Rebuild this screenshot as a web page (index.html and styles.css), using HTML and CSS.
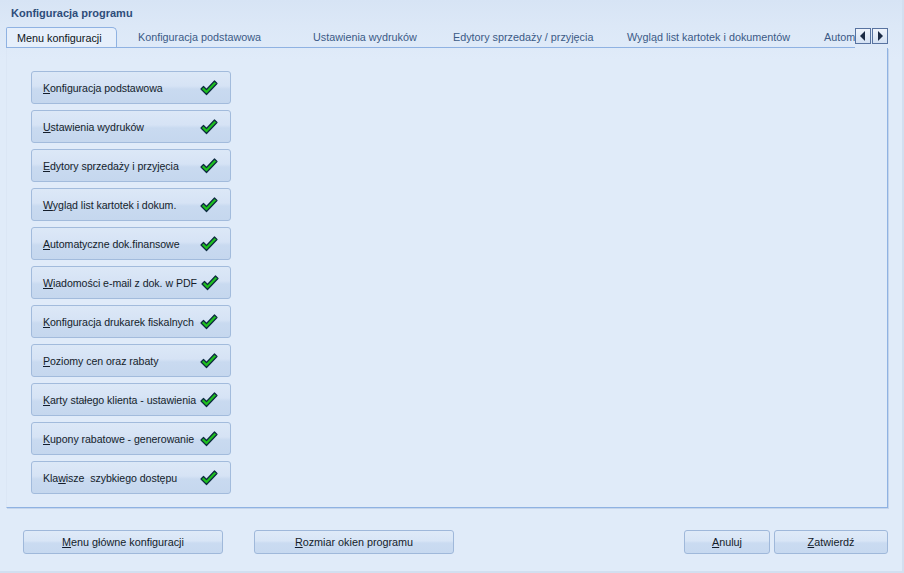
FILE: index.html
```html
<!DOCTYPE html>
<html lang="pl">
<head>
<meta charset="utf-8">
<title>Konfiguracja programu</title>
<link rel="stylesheet" href="styles.css">
</head>
<body>
<div class="window">
  <div class="title">Konfiguracja programu</div>
  <div class="tabbar">
    <div class="tabs">
      <div class="tab active">Menu konfiguracji</div>
      <div class="tab t1">Konfiguracja podstawowa</div>
      <div class="tab t2">Ustawienia wydruków</div>
      <div class="tab t3">Edytory sprzedaży / przyjęcia</div>
      <div class="tab t4">Wygląd list kartotek i dokumentów</div>
      <div class="tab t5">Automatyczne dok.finansowe</div>
    </div>
    <div class="scroll">
      <span class="arrow"><svg width="8" height="10" viewBox="0 0 8 10"><polygon points="6,0 6,10 1,5" fill="#1b2a44"/></svg></span>
      <span class="arrow"><svg width="8" height="10" viewBox="0 0 8 10"><polygon points="2,0 2,10 7,5" fill="#1b2a44"/></svg></span>
    </div>
  </div>
  <div class="panel">
    <div class="menu">
      <div class="mbtn"><span><u>K</u>onfiguracja podstawowa</span><svg class="check" width="18" height="16" viewBox="0 0 18 16"><path d="M1 9 L3.5 6.5 L6.5 9.5 L14.5 1 L17 3.5 L6.5 14.5 Z" fill="#1ec01e" stroke="#0c2a3f" stroke-width="1.2" stroke-linejoin="round"/></svg></div>
      <div class="mbtn"><span><u>U</u>stawienia wydruków</span><svg class="check" width="18" height="16" viewBox="0 0 18 16"><path d="M1 9 L3.5 6.5 L6.5 9.5 L14.5 1 L17 3.5 L6.5 14.5 Z" fill="#1ec01e" stroke="#0c2a3f" stroke-width="1.2" stroke-linejoin="round"/></svg></div>
      <div class="mbtn"><span><u>E</u>dytory sprzedaży i przyjęcia</span><svg class="check" width="18" height="16" viewBox="0 0 18 16"><path d="M1 9 L3.5 6.5 L6.5 9.5 L14.5 1 L17 3.5 L6.5 14.5 Z" fill="#1ec01e" stroke="#0c2a3f" stroke-width="1.2" stroke-linejoin="round"/></svg></div>
      <div class="mbtn"><span><u>W</u>ygląd list kartotek i dokum.</span><svg class="check" width="18" height="16" viewBox="0 0 18 16"><path d="M1 9 L3.5 6.5 L6.5 9.5 L14.5 1 L17 3.5 L6.5 14.5 Z" fill="#1ec01e" stroke="#0c2a3f" stroke-width="1.2" stroke-linejoin="round"/></svg></div>
      <div class="mbtn"><span><u>A</u>utomatyczne dok.finansowe</span><svg class="check" width="18" height="16" viewBox="0 0 18 16"><path d="M1 9 L3.5 6.5 L6.5 9.5 L14.5 1 L17 3.5 L6.5 14.5 Z" fill="#1ec01e" stroke="#0c2a3f" stroke-width="1.2" stroke-linejoin="round"/></svg></div>
      <div class="mbtn"><span><u>W</u>iadomości e-mail z dok. w PDF</span><svg class="check" width="18" height="16" viewBox="0 0 18 16"><path d="M1 9 L3.5 6.5 L6.5 9.5 L14.5 1 L17 3.5 L6.5 14.5 Z" fill="#1ec01e" stroke="#0c2a3f" stroke-width="1.2" stroke-linejoin="round"/></svg></div>
      <div class="mbtn"><span><u>K</u>onfiguracja drukarek fiskalnych</span><svg class="check" width="18" height="16" viewBox="0 0 18 16"><path d="M1 9 L3.5 6.5 L6.5 9.5 L14.5 1 L17 3.5 L6.5 14.5 Z" fill="#1ec01e" stroke="#0c2a3f" stroke-width="1.2" stroke-linejoin="round"/></svg></div>
      <div class="mbtn"><span><u>P</u>oziomy cen oraz rabaty</span><svg class="check" width="18" height="16" viewBox="0 0 18 16"><path d="M1 9 L3.5 6.5 L6.5 9.5 L14.5 1 L17 3.5 L6.5 14.5 Z" fill="#1ec01e" stroke="#0c2a3f" stroke-width="1.2" stroke-linejoin="round"/></svg></div>
      <div class="mbtn"><span><u>K</u>arty stałego klienta - ustawienia</span><svg class="check" width="18" height="16" viewBox="0 0 18 16"><path d="M1 9 L3.5 6.5 L6.5 9.5 L14.5 1 L17 3.5 L6.5 14.5 Z" fill="#1ec01e" stroke="#0c2a3f" stroke-width="1.2" stroke-linejoin="round"/></svg></div>
      <div class="mbtn"><span><u>K</u>upony rabatowe - generowanie</span><svg class="check" width="18" height="16" viewBox="0 0 18 16"><path d="M1 9 L3.5 6.5 L6.5 9.5 L14.5 1 L17 3.5 L6.5 14.5 Z" fill="#1ec01e" stroke="#0c2a3f" stroke-width="1.2" stroke-linejoin="round"/></svg></div>
      <div class="mbtn"><span>Kla<u>w</u>isze&nbsp; szybkiego dostępu</span><svg class="check" width="18" height="16" viewBox="0 0 18 16"><path d="M1 9 L3.5 6.5 L6.5 9.5 L14.5 1 L17 3.5 L6.5 14.5 Z" fill="#1ec01e" stroke="#0c2a3f" stroke-width="1.2" stroke-linejoin="round"/></svg></div>
    </div>
  </div>
  <div class="footer">
    <div class="fbtn wide"><u>M</u>enu główne konfiguracji</div>
    <div class="fbtn wide second"><u>R</u>ozmiar okien programu</div>
    <div class="spacer"></div>
    <div class="fbtn cancel"><u>A</u>nuluj</div>
    <div class="fbtn ok"><u>Z</u>atwierdź</div>
  </div>
</div>
</body>
</html>
```
FILE: styles.css
```css
html, body {
  margin: 0;
  padding: 0;
}
body {
  font-family: "Liberation Sans", Arial, sans-serif;
  font-size: 11px;
  color: #111a28;
  background: #dfeaf8;
}
.window {
  width: 904px;
  height: 573px;
  box-sizing: border-box;
  background: linear-gradient(#d7e4f5 0px, #dce8f7 26px, #e0ebf9 60px, #e0ebf9 100%);
  border-right: 2px solid #d2dff0;
  border-bottom: 2px solid #d2dff0;
  display: flex;
  flex-direction: column;
}
.title {
  height: 27px;
  box-sizing: border-box;
  padding: 7px 0 0 11px;
  font-weight: bold;
  font-size: 11px;
  color: #2e4d7a;
}
.tabbar {
  display: flex;
  height: 21px;
  margin-left: 6px;
  width: 882px;
}
.tabs {
  display: flex;
  width: 849px;
  overflow: hidden;
  border-bottom: 1px solid #8fb2e2;
  box-sizing: border-box;
  height: 21px;
}
.tab {
  flex: none;
  box-sizing: border-box;
  height: 20px;
  line-height: 20px;
  padding-left: 21px;
  color: #3b5a86;
  white-space: nowrap;
  font-size: 10.8px;
}
.tab.active {
  width: 111px;
  height: 21px;
  padding-left: 10px;
  color: #0d1520;
  background: #e6effb;
  border: 1px solid #8fb2e2;
  border-bottom: none;
  border-radius: 2px 5px 0 0;
}
.t1 { width: 175px; }
.t2 { width: 140px; }
.t3 { width: 174px; }
.t4 { width: 197px; }
.t5 { width: 200px; }
.scroll {
  display: flex;
  gap: 1px;
  height: 17px;
  margin-top: 1px;
}
.arrow {
  width: 16px;
  height: 16px;
  box-sizing: border-box;
  border: 1px solid #5873a0;
  background: linear-gradient(#eef3fb, #d4e1f3);
  display: flex;
  align-items: center;
  justify-content: center;
}
.panel {
  margin-left: 6px;
  width: 882px;
  height: 460px;
  box-sizing: border-box;
  border: 1px solid #8fb2e2;
  border-top: none;
  border-left-color: #dbe6f5;
  box-shadow: 1px 1px 0 #c5d5ec;
  padding: 23px 0 0 24px;
}
.menu {
  display: flex;
  flex-direction: column;
  gap: 6px;
}
.mbtn {
  width: 200px;
  height: 33px;
  box-sizing: border-box;
  border: 1px solid #a2bbdc;
  border-radius: 3px;
  background: linear-gradient(#dce8f7 0%, #d6e3f5 45%, #c9daf0 55%, #c5d7ee 100%);
  display: flex;
  align-items: center;
  padding-left: 11px;
  padding-right: 9px;
  color: #141d2b;
  white-space: nowrap;
  font-size: 10.6px;
  letter-spacing: -0.05px;
}
.mbtn span {
  flex: none;
  margin-right: 4px;
}
.check {
  flex: none;
  margin-left: auto;
  margin-right: 3px;
}
.footer {
  display: flex;
  align-items: flex-start;
  padding: 22px 0 0 23px;
  height: 24px;
}
.fbtn {
  height: 24px;
  box-sizing: border-box;
  border: 1px solid #9fb8da;
  border-radius: 3px;
  background: linear-gradient(#dfeaf8 0%, #d8e5f6 45%, #cadbf1 55%, #c7d9f0 100%);
  display: flex;
  align-items: center;
  justify-content: center;
  color: #141d2b;
  white-space: nowrap;
  font-size: 10.8px;
}
.wide { width: 200px; }
.second { margin-left: 31px; }
.spacer { flex: 1; }
.cancel { width: 86px; }
.ok { width: 114px; margin-left: 4px; margin-right: 14px; }
```
